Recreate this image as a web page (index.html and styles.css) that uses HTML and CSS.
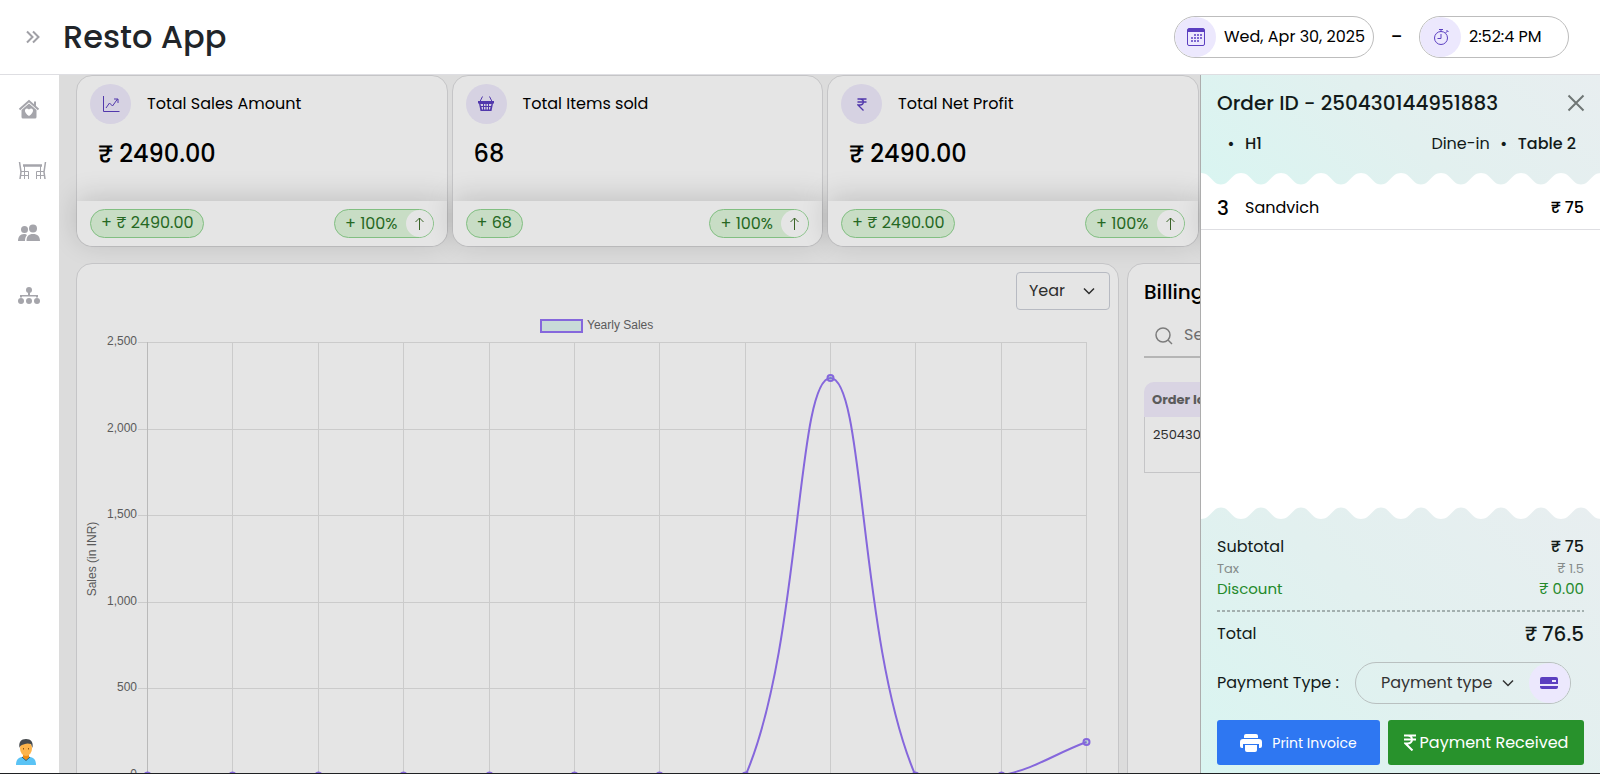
FILE: index.html
```html
<!DOCTYPE html>
<html lang="en">
<head>
<meta charset="utf-8">
<title>Resto App</title>
<link rel="stylesheet" href="styles.css">
</head>
<body>
<div class="app">
  <header class="topbar">
    <button class="toggle" aria-label="Expand menu">
      <svg width="16" height="16" viewBox="0 0 16 16"><path d="M2 2.500L7.500 8 2 13.500M8 2.500L13.500 8 8 13.500"/></svg>
    </button>
    <h1 class="brand">Resto App</h1>
    <div class="clock">
      <div class="pill pill-date">
        <span class="pill-icon"><svg width="18" height="18" viewBox="0 0 18 18"><path d="M2 .5h14A1.500 1.500 0 0 1 17.500 2v14a1.500 1.500 0 0 1-1.500 1.500H2A1.500 1.500 0 0 1 .5 16V2A1.500 1.500 0 0 1 2 .5z" fill="none" stroke="#5b3fc0"/><path d="M1 1h16v3H1z" fill="#5b3fc0"/><path d="M7 6h2v2H7zM10 6h2v2h-2zM13 6h2v2h-2zM4 9h2v2H4zM7 9h2v2H7zM10 9h2v2h-2zM13 9h2v2h-2zM4 12h2v2H4zM7 12h2v2H7zM10 12h2v2h-2z" fill="#5b3fc0" fill-opacity=".75"/></svg></span>
        <span>Wed, Apr 30, 2025</span>
      </div>
      <span class="dash">–</span>
      <div class="pill pill-time">
        <span class="pill-icon"><svg class="line" width="18" height="18" viewBox="0 0 18 18"><circle cx="9" cy="10" r="6.500"/><path d="M9 6v4.500H5.500M7 1.500h4M9 1.500v2M13.500 5l2-2M14.500 2l2 2"/></svg></span>
        <span>2:52:4 PM</span>
      </div>
    </div>
  </header>
  <div class="workspace">
    <nav class="sidebar" aria-label="Main">
      <a href="#home" aria-label="Home"><svg width="22" height="20" viewBox="0 0 22 20"><path d="M1.500 10.500L11 2l9.500 8.500M17 7V2.500" fill="none" stroke="#a5a5ab" stroke-width="2"/><path fill-rule="evenodd" d="M11 4.500l7.500 6.500v7a1.500 1.500 0 0 1-1.500 1.500H5A1.500 1.500 0 0 1 3.500 18v-7zM11 17c5.500-3.500 4.500-7.500 2.200-7.500-1.400 0-2.200 1.200-2.200 1.200S10.200 9.500 8.800 9.500C6.500 9.500 5.500 13.500 11 17z" fill="#a5a5ab"/></svg></a>
      <a href="#tables" aria-label="Tables"><svg width="29" height="18" viewBox="0 0 29 18"><g fill="none" stroke="#a5a5ab"><path d="M1.500 0L3 10l-1 7M27.500 0L26 10l1 7" stroke-width="1.500"/><path d="M5 3.500h19" stroke-width="2.500"/><path d="M6.500 4v5.500M22.500 4v5.500M3 9.500h7.500V17M26 9.500h-7.500V17M6.500 10v7M22.500 10v7M3 13.500h7M19 13.500h7"/></g></svg></a>
      <a href="#staff" aria-label="Staff"><svg width="22" height="18" viewBox="0 0 22 18" fill="#a5a5ab"><circle cx="6.500" cy="5.500" r="3.500"/><circle cx="15" cy="4.500" r="4"/><path d="M0 17c0-4 2-7 6-7 1.500 0 2.500.5 3 1-1.500 1.500-2 3.500-2 6zM8.500 17c0-4.500 2-7 6.500-7s7 2.500 7 7z"/></svg></a>
      <a href="#structure" aria-label="Structure"><svg width="22" height="17" viewBox="0 0 22 17" fill="#a5a5ab"><circle cx="11" cy="3" r="3"/><path d="M10 5h2v3h8v2.500h-2V9.500H4v1H2V8h8z"/><circle cx="3" cy="14" r="3"/><circle cx="11" cy="14" r="3"/><circle cx="19" cy="14" r="3"/></svg></a>
      <a class="avatar" href="#profile" aria-label="Profile"><svg width="20" height="26" viewBox="0 0 20 26"><path d="M0 26c0-6 3-8.500 10-8.500S20 20 20 26z" fill="#5ac3f5"/><path d="M6 18l4 3.500 4-3.500" fill="#f39a1c" stroke="#2a5d80"/><path d="M7 13h6v5l-3 2-3-2z" fill="#f28c0f"/><ellipse cx="10" cy="9.500" rx="6" ry="7.500" fill="#fdb44b"/><path d="M3.500 9C2.500 3 5 0 10 0s7.500 3 6.500 9L15 5C12 4 10 4.500 9 5 7 6 4.500 5.500 3.500 9z" fill="#464a4d"/><path d="M7.500 9v1.500M12.500 9v1.500" stroke="#8a5515"/></svg></a>
    </nav>
    <main class="content">
      <section class="stats">
        <article class="card stat">
          <div class="stat-head"><span class="disc"><svg class="line" width="18" height="18" viewBox="0 0 18 18"><path d="M1.500 1v15.500h16M4 13l3.500-5 3 3 5-7M12 4h4v4"/></svg></span><h2>Total Sales Amount</h2></div>
          <p class="amount">₹ 2490.00</p>
          <div class="stat-foot"><span class="badge">+ ₹ 2490.00</span><span class="badge badge-up">+ 100% <i class="up"><svg width="11" height="13" viewBox="0 0 11 13"><path d="M5.500 13V1M1.500 5l4-4 4 4"/></svg></i></span></div>
        </article>
        <article class="card stat">
          <div class="stat-head"><span class="disc"><svg width="18" height="16" viewBox="0 0 18 16"><path d="M5.500 .5L3 5.500M12.500 .5L15 5.500" stroke="#5b3fc0" fill="none"/><path fill-rule="evenodd" d="M1 5h16v2.500h-1L14.500 15h-11L2 7.500H1zM3.500 8l.5 2h2V8zm3.500 0v2h1.500V8zm2.500 0v2H11V8zM12 8v2h2l.5-2zM4.500 11l.5 2.500h1V11zm2.500 0v2.500h1.500V11zm2.500 0v2.500H11V11zm2.500 0v2.500h1l.5-2.500z" fill="#5b3fc0"/></svg></span><h2>Total Items sold</h2></div>
          <p class="amount">68</p>
          <div class="stat-foot"><span class="badge">+ 68</span><span class="badge badge-up">+ 100% <i class="up"><svg width="11" height="13" viewBox="0 0 11 13"><path d="M5.500 13V1M1.500 5l4-4 4 4"/></svg></i></span></div>
        </article>
        <article class="card stat">
          <div class="stat-head"><span class="disc"><svg class="line" width="10" height="13" viewBox="0 0 10 13"><path d="M.5 1h9M.5 4h9M1 1h2c4.500 0 4.500 6 0 6H1l5.500 5.500" stroke-width="1.300"/></svg></span><h2>Total Net Profit</h2></div>
          <p class="amount">₹ 2490.00</p>
          <div class="stat-foot"><span class="badge">+ ₹ 2490.00</span><span class="badge badge-up">+ 100% <i class="up"><svg width="11" height="13" viewBox="0 0 11 13"><path d="M5.500 13V1M1.500 5l4-4 4 4"/></svg></i></span></div>
        </article>
        <article class="card stat"><div></div><div></div><div class="stat-foot"></div></article>
      </section>
      <section class="reports">
        <div class="card chart-card">
          <div class="chart-tools">
            <label class="picker"><select aria-label="Period"><option>Year</option></select><svg width="14" height="14" viewBox="0 0 14 14"><path d="M2 4.500l5 5 5-5"/></svg></label>
          </div>
          <svg class="chart" viewBox="0 0 1041 480" role="img" aria-label="Yearly Sales">
            <g class="grid"><path d="M61 30.500H1009.500M61 117.500H1009.500M61 203.500H1009.500M61 290.500H1009.500M61 376.500H1009.500M61 463.500H1009.500"/><path d="M155.500 30v440M241.500 30v440M326.500 30v440M412.500 30v440M497.500 30v440M582.500 30v440M668.500 30v440M753.500 30v440M838.500 30v440M924.500 30v440M1009.500 30v440"/><path class="axis" d="M70.500 30v440"/></g>
            <rect x="464" y="8" width="41" height="12" fill="#dff3f1" stroke="#9573f5" stroke-width="2"/>
            <text x="510" y="17">Yearly Sales</text>
            <g class="ticks"><text x="60" y="33">2,500</text><text x="60" y="120">2,000</text><text x="60" y="206">1,500</text><text x="60" y="293">1,000</text><text x="60" y="379">500</text><text x="60" y="466">0</text></g>
            <text class="axis-title" transform="translate(19 247) rotate(-90)">Sales (in INR)</text>
            <g class="series"><path d="M70.500 463.500H668.500C725 332 719 66 753.500 66S782 332 838.500 463.500H924.500C960 456 975 443 1009.500 430"/>
            <circle cx="70.500" cy="463.500" r="3"/><circle cx="155.500" cy="463.500" r="3"/><circle cx="241.500" cy="463.500" r="3"/><circle cx="326.500" cy="463.500" r="3"/><circle cx="412.500" cy="463.500" r="3"/><circle cx="497.500" cy="463.500" r="3"/><circle cx="582.500" cy="463.500" r="3"/><circle cx="668.500" cy="463.500" r="3"/><circle cx="753.500" cy="66" r="3"/><circle cx="838.500" cy="463.500" r="3"/><circle cx="924.500" cy="463.500" r="3"/><circle cx="1009.500" cy="430" r="3"/></g>
          </svg>
        </div>
        <div class="card billing">
          <h2>Billing</h2>
          <label class="search"><svg width="20" height="20" viewBox="0 0 20 20"><circle cx="9" cy="10" r="7"/><path d="M14 15l4 4"/></svg><input type="search" placeholder="Search" aria-label="Search bills"></label>
          <table><thead><tr><th>Order Id</th></tr></thead><tbody><tr><td>250430144951883</td></tr></tbody></table>
        </div>
      </section>
    </main>
    <div class="backdrop"></div>
    <aside class="drawer" aria-label="Order">
      <div class="order-head">
        <div class="order-title"><h2>Order ID - 250430144951883</h2><button class="close" aria-label="Close"><svg width="18" height="18" viewBox="0 0 18 18"><path d="M1.500 1.500l15 15M16.500 1.500l-15 15"/></svg></button></div>
        <div class="order-meta"><span><b class="dot">•</b><b>H1</b></span><span>Dine-in<b class="dot">•</b><b>Table 2</b></span></div>
        <svg class="wave" width="100%" height="12"><defs><pattern id="wave-top" width="40" height="12" patternUnits="userSpaceOnUse"><path d="M0 0C10 0 11 11.500 20 11.500S30 0 40 0V12H0z" fill="#fff"/></pattern></defs><rect width="100%" height="12" fill="url(#wave-top)"/></svg>
      </div>
      <ul class="items"><li><b class="qty">3</b><span class="name">Sandvich</span><b>₹ 75</b></li></ul>
      <div class="order-foot">
        <svg class="wave" width="100%" height="12"><defs><pattern id="wave-foot" width="40" height="12" patternUnits="userSpaceOnUse"><path d="M0 12C10 12 11 .5 20 .5S30 12 40 12V0H0z" fill="#fff"/></pattern></defs><rect width="100%" height="12" fill="url(#wave-foot)"/></svg>
        <div class="summary">
          <div class="line-row"><span>Subtotal</span><b>₹ 75</b></div>
          <div class="line-row tax"><span>Tax</span><span>₹ 1.5</span></div>
          <div class="line-row discount"><span>Discount</span><span>₹ 0.00</span></div>
          <svg class="rule" width="100%" height="2"><path d="M0 1H2000" stroke="#a3b0af" stroke-width="2" stroke-dasharray="3 2"/></svg>
          <div class="line-row total"><span>Total</span><b>₹ 76.5</b></div>
          <div class="payment"><label for="pay">Payment Type :</label>
            <div class="pay-pill"><select id="pay"><option>Payment type</option></select><svg class="chev" width="14" height="14" viewBox="0 0 14 14"><path d="M2 4.500l5 5 5-5"/></svg><span class="pill-icon"><svg width="18" height="14" viewBox="0 0 18 14" fill="#5b3fc0"><path fill-rule="evenodd" d="M2 1h14a2 2 0 0 1 2 2v5H0V3a2 2 0 0 1 2-2zm10 3v2h4V4z"/><path d="M0 10h18v1a2 2 0 0 1-2 2H2a2 2 0 0 1-2-2z"/></svg></span></div>
          </div>
          <div class="actions">
            <button class="btn print"><svg width="22" height="20" viewBox="0 0 22 20"><path d="M4 5V3a2 2 0 0 1 2-2h10a2 2 0 0 1 2 2v2z" fill="#fff"/><path d="M3 6h16a3 3 0 0 1 3 3v4a2 2 0 0 1-2 2h-1v-4H3v4H2a2 2 0 0 1-2-2V9a3 3 0 0 1 3-3z" fill="#fff"/><path d="M5 12h12v5a2 2 0 0 1-2 2H7a2 2 0 0 1-2-2z" fill="#fff"/></svg>Print Invoice</button>
            <button class="btn received"><svg width="12" height="17" viewBox="0 0 12 17"><path d="M0 1.500h12M0 5.500h12M1 1.500h2.500c6 0 6 8 0 8H1.500l7 7"/></svg>Payment Received</button>
          </div>
        </div>
      </div>
    </aside>
  </div>
</div>
</body>
</html>
```
FILE: styles.css
```css
* { box-sizing: border-box; }
body { margin: 0; font: 16px/24px Poppins, Inter, sans-serif; color: #000; }
h1, h2, p, ul { margin: 0; padding: 0; }
h2, b { font-weight: 500; }
button, select, input { font: inherit; color: inherit; }
button { border: 0; background: none; padding: 0; cursor: pointer; }
svg { display: block; flex: none; }

.app { height: 100vh; display: flex; flex-direction: column; overflow: hidden; background: #fff; border-bottom: 1px solid #1f2123; }
.topbar { flex: none; display: flex; align-items: center; min-height: 75px; padding: 0 31px 0 25px; border-bottom: 1px solid #dedee2; }
.toggle svg { fill: none; stroke: #a0a0a6; stroke-width: 2; }
.brand { margin-left: 22px; font-size: 32px; line-height: 48px; font-weight: 500; color: #212529; }
.clock { margin-left: auto; display: flex; align-items: center; }
.pill { display: flex; align-items: center; gap: 8px; height: 42px; border: 1px solid #bdbdbd; border-radius: 21px; overflow: hidden; white-space: nowrap; }
.pill-date { width: 200px; }
.pill-time { width: 150px; }
.pill-icon { flex: none; width: 41px; height: 40px; border-radius: 50%; background: #ece8fd; display: grid; place-items: center; }
.line { fill: none; stroke: #5b3fc0; }
.dash { width: 45px; text-align: center; font-weight: 600; }

.workspace { flex: 1; min-height: 0; display: flex; position: relative; overflow: hidden; }
.sidebar { flex: none; width: 59px; padding: 24px 0 8px 18px; display: flex; flex-direction: column; gap: 42px; position: relative; z-index: 2; background: #fff; }
.sidebar a { display: flex; align-items: center; height: 20px; }
.sidebar .avatar { margin-top: auto; margin-left: -2px; height: 26px; }
.content { flex: 1; min-width: 0; padding: 0 26px 0 17px; background: #f5f5f5; overflow: hidden; }
.backdrop { position: absolute; inset: 0; background: rgba(0, 0, 0, .1); }

.card { background: #fff; border: 1px solid #dcdcde; border-radius: 16px; }
.stats { display: grid; grid-template-columns: repeat(4, 1fr); gap: 4px; }
.stat { display: grid; grid-template-rows: 48px 77px 45px; }
.stat-head { display: flex; align-items: center; gap: 16px; padding: 8px 13px 0; }
.stat-head h2 { font-size: 16px; font-weight: 400; white-space: nowrap; }
.disc { width: 41px; height: 40px; border-radius: 50%; background: #efeafc; display: grid; place-items: center; }
.amount { padding: 12px 21px; font-size: 24px; line-height: 36px; font-weight: 500; }
.stat-foot { display: flex; justify-content: space-between; align-items: center; padding: 0 13px; background: #fff; border-radius: 0 0 16px 16px; box-shadow: 0 -4px 28px rgba(0, 0, 0, .16); }
.badge { display: flex; align-items: center; height: 29px; padding: 0 10px 2px; border: 1px solid #91d591; border-radius: 15px; background: #dff7dc; color: #2b7428; white-space: nowrap; }
.badge-up { padding: 0; padding-left: 10px; gap: 8px; }
.up { width: 27px; height: 27px; border-radius: 50%; background: #fff; display: grid; place-items: center; }
.up svg { fill: none; stroke: #41702c; }

.reports { display: grid; grid-template-columns: 7fr 3fr; gap: 8px; margin-top: 16px; }
.reports .card { min-width: 0; min-height: 560px; }
.chart-tools { display: flex; justify-content: flex-end; padding: 8px 8px 0; }
.picker { display: grid; align-items: center; width: 94px; height: 38px; border: 1px solid #ccd0d8; border-radius: 4px; }
.picker select, .picker svg { grid-area: 1 / 1; }
select { appearance: none; border: 0; background: none; outline: 0; color: #333; }
.picker select { width: 100%; height: 100%; padding: 0 12px; }
.picker svg { justify-self: end; margin-right: 13px; pointer-events: none; }
.picker svg, .chev { fill: none; stroke: #333; stroke-width: 1.5; }
.chart { width: 100%; margin-top: 2px; font: 12px "Liberation Sans", sans-serif; }
.chart text { fill: #666; }
.grid { stroke: #e2e2e2; fill: none; }
.axis { stroke: #cfcfcf; }
.ticks { text-anchor: end; }
.axis-title { text-anchor: middle; }
.series { fill: rgba(75, 192, 192, .2); stroke: #9573f5; stroke-width: 2; }
.series path { fill: none; }

.billing { padding: 15px 16px; overflow: hidden; }
.billing h2 { font-size: 20px; line-height: 26px; }
.search { display: flex; align-items: center; gap: 10px; height: 45px; margin-top: 8px; padding: 0 10px; border-bottom: 2px solid #cacaca; }
.search svg { fill: none; stroke: #8b8b8b; stroke-width: 1.5; }
.search input { flex: 1; min-width: 0; border: 0; padding: 0; outline: 0; background: none; }
.search input::placeholder { color: #7b7b7b; opacity: 1; }
.billing table { width: 100%; margin-top: 24px; border-spacing: 0; font-size: 13px; line-height: 18px; text-align: left; }
.billing th { height: 35px; padding: 0 8px; border-radius: 10px 10px 0 0; background: #f2ecfd; color: #666; font-weight: 700; }
.billing td { height: 56px; padding: 9px 8px; vertical-align: top; border: 1px solid #dcdcde; border-top: 0; color: #333; }

.drawer { position: absolute; inset: 0 0 0 auto; width: 25vw; display: flex; flex-direction: column; background: #fff; border-left: 1px solid #adadad; }
.order-head, .order-foot { flex: none; color: #121a19; background: linear-gradient(45deg, #d9f5f1, #e2f0ef 50%, #e8eef0); }
.order-title { display: flex; justify-content: space-between; align-items: center; padding: 14px 15px 0 16px; }
.order-title h2 { font-size: 20px; line-height: 28px; white-space: nowrap; }
.close svg { fill: none; stroke: #6f7675; stroke-width: 2; }
.order-meta { display: flex; justify-content: space-between; padding: 15px 24px 17px 16px; }
.dot { display: inline-block; width: 28px; text-align: center; }
.items { flex: 1; list-style: none; }
.items li { display: flex; align-items: center; height: 45px; padding: 1px 16px 0; border-bottom: 1px solid #dedee2; }
.qty { width: 28px; font-size: 20px; }
.name { flex: 1; }
.summary { padding: 16px 16px 8px; }
.line-row { display: flex; justify-content: space-between; align-items: center; line-height: 24px; }
.line-row.tax { font-size: 13px; line-height: 20px; color: #858b8a; }
.line-row.discount { font-size: 15px; line-height: 19px; color: #23892a; }
.rule { margin-top: 12px; }
.total { margin-top: 8px; line-height: 28px; }
.total b { font-size: 20px; }
.payment { display: flex; align-items: center; gap: 16px; margin-top: 14px; white-space: nowrap; }
.pay-pill { flex: none; width: 216px; height: 42px; display: flex; align-items: center; justify-content: flex-end; gap: 8px; border: 1px solid #b9c0c0; border-radius: 21px; }
.pay-pill .chev { margin-right: 6px; }
.pay-pill select { padding: 0; }
.actions { display: grid; grid-template-columns: 163fr 196fr; gap: 8px; margin-top: 16px; }
.btn { display: flex; align-items: center; justify-content: center; height: 45px; border-radius: 3px; color: #fff; white-space: nowrap; }
.print { gap: 10px; background: #2e77f2; font-size: 14px; }
.received { gap: 4px; background: #28922c; font-size: 16px; }
.received svg { fill: none; stroke: #fff; stroke-width: 2; }
```
